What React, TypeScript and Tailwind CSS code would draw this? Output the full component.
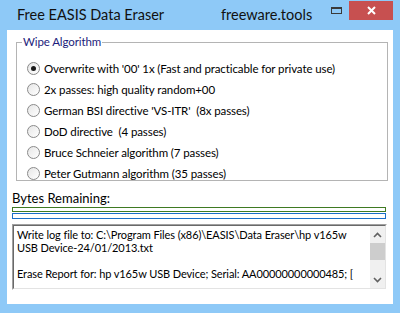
import React from "react";

const options = [
  "Overwrite with '00' 1x (Fast and practicable for private use)",
  "2x passes: high quality random+00",
  "German BSI directive 'VS-ITR'  (8x passes)",
  "DoD directive  (4 passes)",
  "Bruce Schneier algorithm (7 passes)",
  "Peter Gutmann algorithm (35 passes)",
];

function Radio({ checked }: { checked: boolean }) {
  return (
    <span className="relative flex h-[13px] w-[13px] shrink-0 items-center justify-center rounded-full border border-[#8a8a8a] bg-gradient-to-br from-[#e6e6e6] to-[#ffffff]">
      {checked && <span className="h-[5px] w-[5px] rounded-full bg-[#1a1a1a]" />}
    </span>
  );
}

export default function App() {
  return (
    <div className="relative h-[313px] w-[400px] overflow-hidden bg-[#8ec9f7] font-['Lato',sans-serif] text-[11.5px] tracking-[-0.1px] text-black">
      {/* Title bar */}
      <div className="relative flex h-[30px] items-start">
        <div className="ml-[17px] mt-[5px] w-[204px] text-[14.5px] leading-[20px] tracking-normal text-[#111]">Free EASIS Data Eraser</div>
        <div className="mt-[5px] w-[110px] text-[14.5px] leading-[20px] tracking-normal text-[#111]">freeware.tools</div>
        <div className="mt-[7px] h-[7px] w-[11px] border border-t-2 border-[#3a3a3a]" />
        <div className="ml-[7px] mt-[1px] flex h-[19px] w-[44px] items-center justify-center bg-[#c75050]">
          <svg width="9" height="9" viewBox="0 0 9 9">
            <path d="M1 1 L8 8 M8 1 L1 8" stroke="#fff" strokeWidth="2" />
          </svg>
        </div>
      </div>

      {/* Client area */}
      <div className="mx-[7px] flex h-[274px] flex-col bg-white">
        {/* Group box */}
        <div className="relative ml-[9px] mt-[12px] h-[139px] w-[372px] border border-[#b4b4b4]">
          <div className="absolute left-[5px] top-[-9px] bg-white px-[1px] leading-[16px] text-[#1c1c7c]">Wipe Algorithm</div>
          <div className="flex flex-col pl-[10px] pt-[15px]">
            {options.map((o, i) => (
              <div key={i} className="flex h-[21px] items-center gap-[4px] whitespace-pre">
                <Radio checked={i === 0} />
                <span className="leading-[16px]">{o}</span>
              </div>
            ))}
          </div>
        </div>

        {/* Bytes remaining */}
        <div className="ml-[5px] mt-[9px] text-[13px] leading-[16px] tracking-normal">Bytes Remaining:</div>
        <div className="ml-[5px] mt-[1px] h-[5px] w-[374px] border border-[#3f7a22]" />
        <div className="ml-[5px] mt-[1px] h-[6px] w-[374px] border border-[#1a6fc9]" />

        {/* Log */}
        <div className="ml-[5px] mt-[5px] flex h-[66px] w-[375px] border border-b-[#ffffff] border-l-[#a0a0a0] border-r-[#ffffff] border-t-[#a0a0a0]">
          <div className="flex min-w-0 flex-1 border border-b-[#e3e3e3] border-l-[#696969] border-r-[#e3e3e3] border-t-[#696969]">
            <div className="min-w-0 flex-1 overflow-hidden whitespace-nowrap pl-[3px] pt-[2px] text-[11px] leading-[13px]">
              <div>Write log file to: C:\Program Files (x86)\EASIS\Data Eraser\hp v165w</div>
              <div>USB Device-24/01/2013.txt</div>
              <div>&nbsp;</div>
              <div>Erase Report for: hp v165w USB Device; Serial: AA00000000000485; [</div>
            </div>
            <div className="flex w-[15px] shrink-0 flex-col bg-[#f0f0f0]">
              <div className="flex h-[17px] items-center justify-center">
                <svg width="9" height="6" viewBox="0 0 9 6">
                  <path d="M1 5 L4.5 1.5 L8 5" stroke="#606060" strokeWidth="1.6" fill="none" />
                </svg>
              </div>
              <div className="h-[17px] bg-[#cdcdcd]" />
              <div className="flex-1" />
              <div className="flex h-[17px] items-center justify-center">
                <svg width="9" height="6" viewBox="0 0 9 6">
                  <path d="M1 1 L4.5 4.5 L8 1" stroke="#606060" strokeWidth="1.6" fill="none" />
                </svg>
              </div>
            </div>
          </div>
        </div>
      </div>
    </div>
  );
}
